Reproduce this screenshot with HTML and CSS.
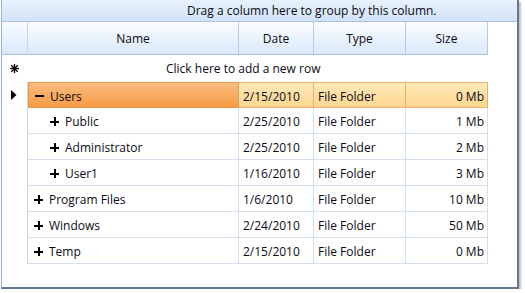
FILE: index.html
```html
<!DOCTYPE html>
<html>
<head>
<meta charset="utf-8">
<link rel="stylesheet" href="styles.css">
</head>
<body>
<div class="frame">
  <div class="group-panel">Drag a column here to group by this column.</div>
  <div class="grid">
    <div class="hdr ind"></div>
    <div class="hdr">Name</div>
    <div class="hdr">Date</div>
    <div class="hdr">Type</div>
    <div class="hdr">Size</div>
    <div class="hdr blank"></div>

    <div class="ind newrow-ind">
      <svg width="9" height="9" viewBox="0 0 9 9"><g stroke="#000" stroke-width="1.3"><line x1="4.5" y1="0" x2="4.5" y2="9"/><line x1="0" y1="4.5" x2="9" y2="4.5"/><line x1="1.3" y1="1.3" x2="7.7" y2="7.7"/><line x1="7.7" y1="1.3" x2="1.3" y2="7.7"/></g></svg>
    </div>
    <div class="newrow">Click here to add a new row</div>

    <div class="ind"><svg width="6" height="10" viewBox="0 0 6 10"><path d="M0 0 L5.5 5 L0 10 Z" fill="#000"/></svg></div>
    <div class="cell name sel-name"><span class="tog minus"></span>Users</div>
    <div class="cell sel">2/15/2010</div>
    <div class="cell sel">File Folder</div>
    <div class="cell sel size">0 Mb</div>
    <div class="blank"></div>

    <div class="ind"></div>
    <div class="cell name child"><span class="tog plus"></span>Public</div>
    <div class="cell">2/25/2010</div>
    <div class="cell">File Folder</div>
    <div class="cell size">1 Mb</div>
    <div class="blank"></div>

    <div class="ind"></div>
    <div class="cell name child"><span class="tog plus"></span>Administrator</div>
    <div class="cell">2/25/2010</div>
    <div class="cell">File Folder</div>
    <div class="cell size">2 Mb</div>
    <div class="blank"></div>

    <div class="ind"></div>
    <div class="cell name child"><span class="tog plus"></span>User1</div>
    <div class="cell">1/16/2010</div>
    <div class="cell">File Folder</div>
    <div class="cell size">3 Mb</div>
    <div class="blank"></div>

    <div class="ind"></div>
    <div class="cell name"><span class="tog plus"></span>Program Files</div>
    <div class="cell">1/6/2010</div>
    <div class="cell">File Folder</div>
    <div class="cell size">10 Mb</div>
    <div class="blank"></div>

    <div class="ind"></div>
    <div class="cell name"><span class="tog plus"></span>Windows</div>
    <div class="cell">2/24/2010</div>
    <div class="cell">File Folder</div>
    <div class="cell size">50 Mb</div>
    <div class="blank"></div>

    <div class="ind"></div>
    <div class="cell name"><span class="tog plus"></span>Temp</div>
    <div class="cell">2/15/2010</div>
    <div class="cell">File Folder</div>
    <div class="cell size">0 Mb</div>
    <div class="blank"></div>
  </div>
</div>
</body>
</html>
```

FILE: styles.css
```css
html, body {
  margin: 0;
  padding: 0;
  background: #fff;
}
body {
  font-family: "Open Sans", "Noto Sans", sans-serif;
  font-size: 12px;
  color: #0a0a14;
}
.frame {
  margin-left: 1px;
  width: 515px;
  height: 287px;
  border-left: 1px solid #9ab3d6;
  border-right: 2px solid #66788f;
  border-bottom: 2px solid #66788f;
  box-shadow: 2px 2px 2px rgba(0,0,0,0.25);
  background: #fff;
}
.group-panel {
  height: 21px;
  line-height: 21px;
  padding-left: 185px;
  background: linear-gradient(#e8f1fd, #d2e3f9);
  border-bottom: 1px solid #a9c3e6;
  white-space: nowrap;
}
.grid {
  display: grid;
  grid-template-columns: 26px 211px 75px 92px 82px 29px;
  grid-template-rows: 33px 27px repeat(7, 26px);
}
.hdr {
  display: flex;
  align-items: center;
  justify-content: center;
  background: linear-gradient(#fbfdff, #dae8fb);
  border-right: 1px solid #b3cbea;
  border-bottom: 1px solid #a7c0e3;
}
.hdr.ind {
  background: linear-gradient(#f7fbff, #dbe8fa);
}
.hdr.blank {
  background: #fff;
  border: none;
}
.ind {
  display: flex;
  align-items: center;
  justify-content: center;
  border-right: 1px solid #c9d7ea;
}
.ind svg { display: block; margin-left: -2px; }
.newrow-ind { border-right: none; }
.newrow {
  grid-column: 2 / 7;
  display: flex;
  align-items: center;
  padding-left: 138px;
}
.cell {
  display: flex;
  align-items: center;
  padding-left: 4px;
  padding-top: 2px;
  border-right: 1px solid #d4dfee;
  border-bottom: 1px solid #d4dfee;
  white-space: nowrap;
}
.cell.size {
  justify-content: flex-end;
  padding-right: 3px;
  padding-left: 0;
}
.cell.name { padding-left: 6px; }
.cell.name.child { padding-left: 22px; }
.tog {
  position: relative;
  display: inline-block;
  width: 9px;
  height: 9px;
  margin-right: 6px;
}
.tog::before, .tog::after {
  content: "";
  position: absolute;
  background: #000;
}
.tog::before { left: 0; top: 3.5px; width: 9px; height: 2px; }
.plus::after { left: 3.5px; top: 0; width: 2px; height: 9px; }
.minus::after { display: none; }
.sel-name {
  background: linear-gradient(#fbbd7e, #f79a45);
  border: 1px solid #e59a52;
  border-right-color: #e3a35e;
}
.sel {
  background: linear-gradient(#fee9b8, #fcd68f);
  border-top: 1px solid #f1b56e;
  border-bottom: 1px solid #f0b06a;
  border-right: 1px solid #e8b06c;
}
.blank { background: #fff; }
```
